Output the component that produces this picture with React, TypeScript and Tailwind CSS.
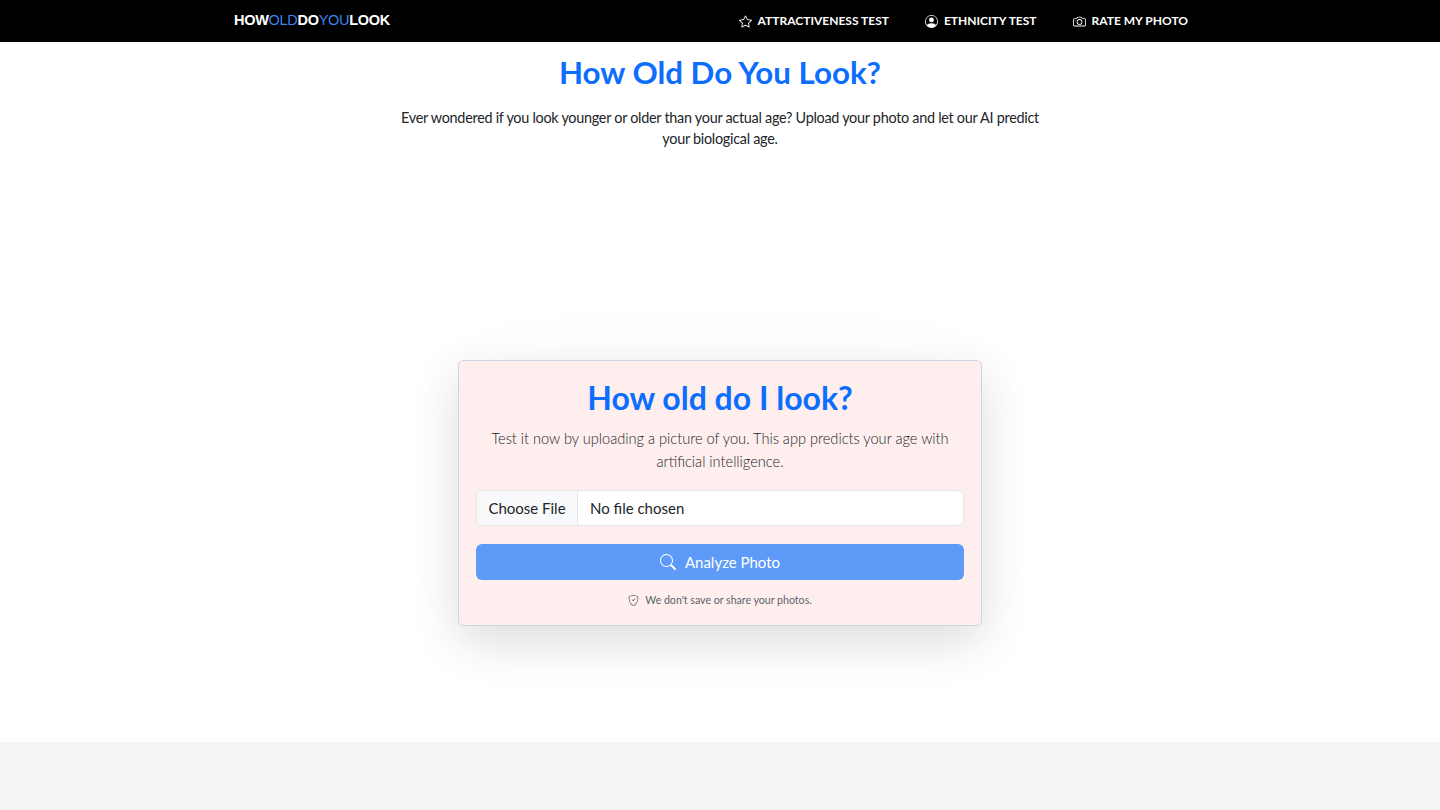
import { BsStar, BsPersonCircle, BsCamera, BsSearch, BsShieldCheck } from "react-icons/bs";

const font = "font-['Lato','Noto_Sans',sans-serif]";

function NavLink({ icon, label }: { icon: React.ReactNode; label: string }) {
  return (
    <a className="flex items-center gap-[6px] text-[12px] font-bold uppercase leading-[16px] text-white">
      {icon}
      <span>{label}</span>
    </a>
  );
}

export default function App() {
  return (
    <div className={`${font} flex min-h-[810px] flex-col bg-white text-[#212529]`}>
      <header className="flex h-[42px] shrink-0 items-center justify-between bg-black pl-[234px] pr-[252px]">
        <div className="font-['Liberation_Sans',sans-serif] text-[14.5px] font-bold tracking-[-0.3px] text-white">
          HOW<span className="font-normal text-[#3f83f0]">OLD</span>DO<span className="font-normal text-[#3f83f0]">YOU</span>LOOK
        </div>
        <nav className="flex items-center gap-[36px]">
          <NavLink icon={<BsStar size={13} />} label="Attractiveness Test" />
          <NavLink icon={<BsPersonCircle size={13} />} label="Ethnicity Test" />
          <NavLink icon={<BsCamera size={13} />} label="Rate My Photo" />
        </nav>
      </header>

      <main className="flex h-[700px] flex-col items-center">
        <h1 className="mt-[11px] text-[31.3px] font-bold leading-[38px] text-[#0d6efd]">How Old Do You Look?</h1>
        <p className="mt-[16px] w-[660px] text-center text-[14.4px] leading-[21px] tracking-[-0.27px] text-[#212529]">
          Ever wondered if you look younger or older than your actual age? Upload your photo and let our AI predict your biological age.
        </p>

        <section className="mt-[211px] w-[524px] rounded-[5px] border border-[#c9d6e6] bg-[#feeeee] px-[17px] pb-[17px] pt-[18px] text-center shadow-[0_16px_48px_rgba(0,0,0,0.13),0_0_110px_rgba(0,0,0,0.02)]">
          <h2 className="text-[32px] font-bold leading-[38px] text-[#0d6efd]">How old do I look?</h2>
          <p className="mt-[10px] text-[14.6px] font-light leading-[23px] text-[#212529]">
            Test it now by uploading a picture of you. This app predicts your age with artificial intelligence.
          </p>
          <div className="mt-[17px] flex h-[36px] overflow-hidden rounded-[6px] border border-[#e6e4e4] bg-white text-left text-[15px]">
            <span className="flex w-[101px] items-center justify-center border-r border-[#e3e5e8] bg-[#f8f9fa]">Choose File</span>
            <span className="flex items-center pl-[12px]">No file chosen</span>
          </div>
          <button className="mt-[18px] flex h-[36px] w-full items-center justify-center gap-[9px] rounded-[6px] bg-[#5e9bf8] text-[15px] text-white">
            <BsSearch size={16} />
            Analyze Photo
          </button>
          <p className="mt-[13px] flex items-center justify-center gap-[6px] text-[10.6px] leading-[15px] text-[#5c636a]">
            <BsShieldCheck size={11} />
            We don't save or share your photos.
          </p>
        </section>
      </main>

      <footer className="h-[68px] bg-[#f4f4f4]" />
    </div>
  );
}
